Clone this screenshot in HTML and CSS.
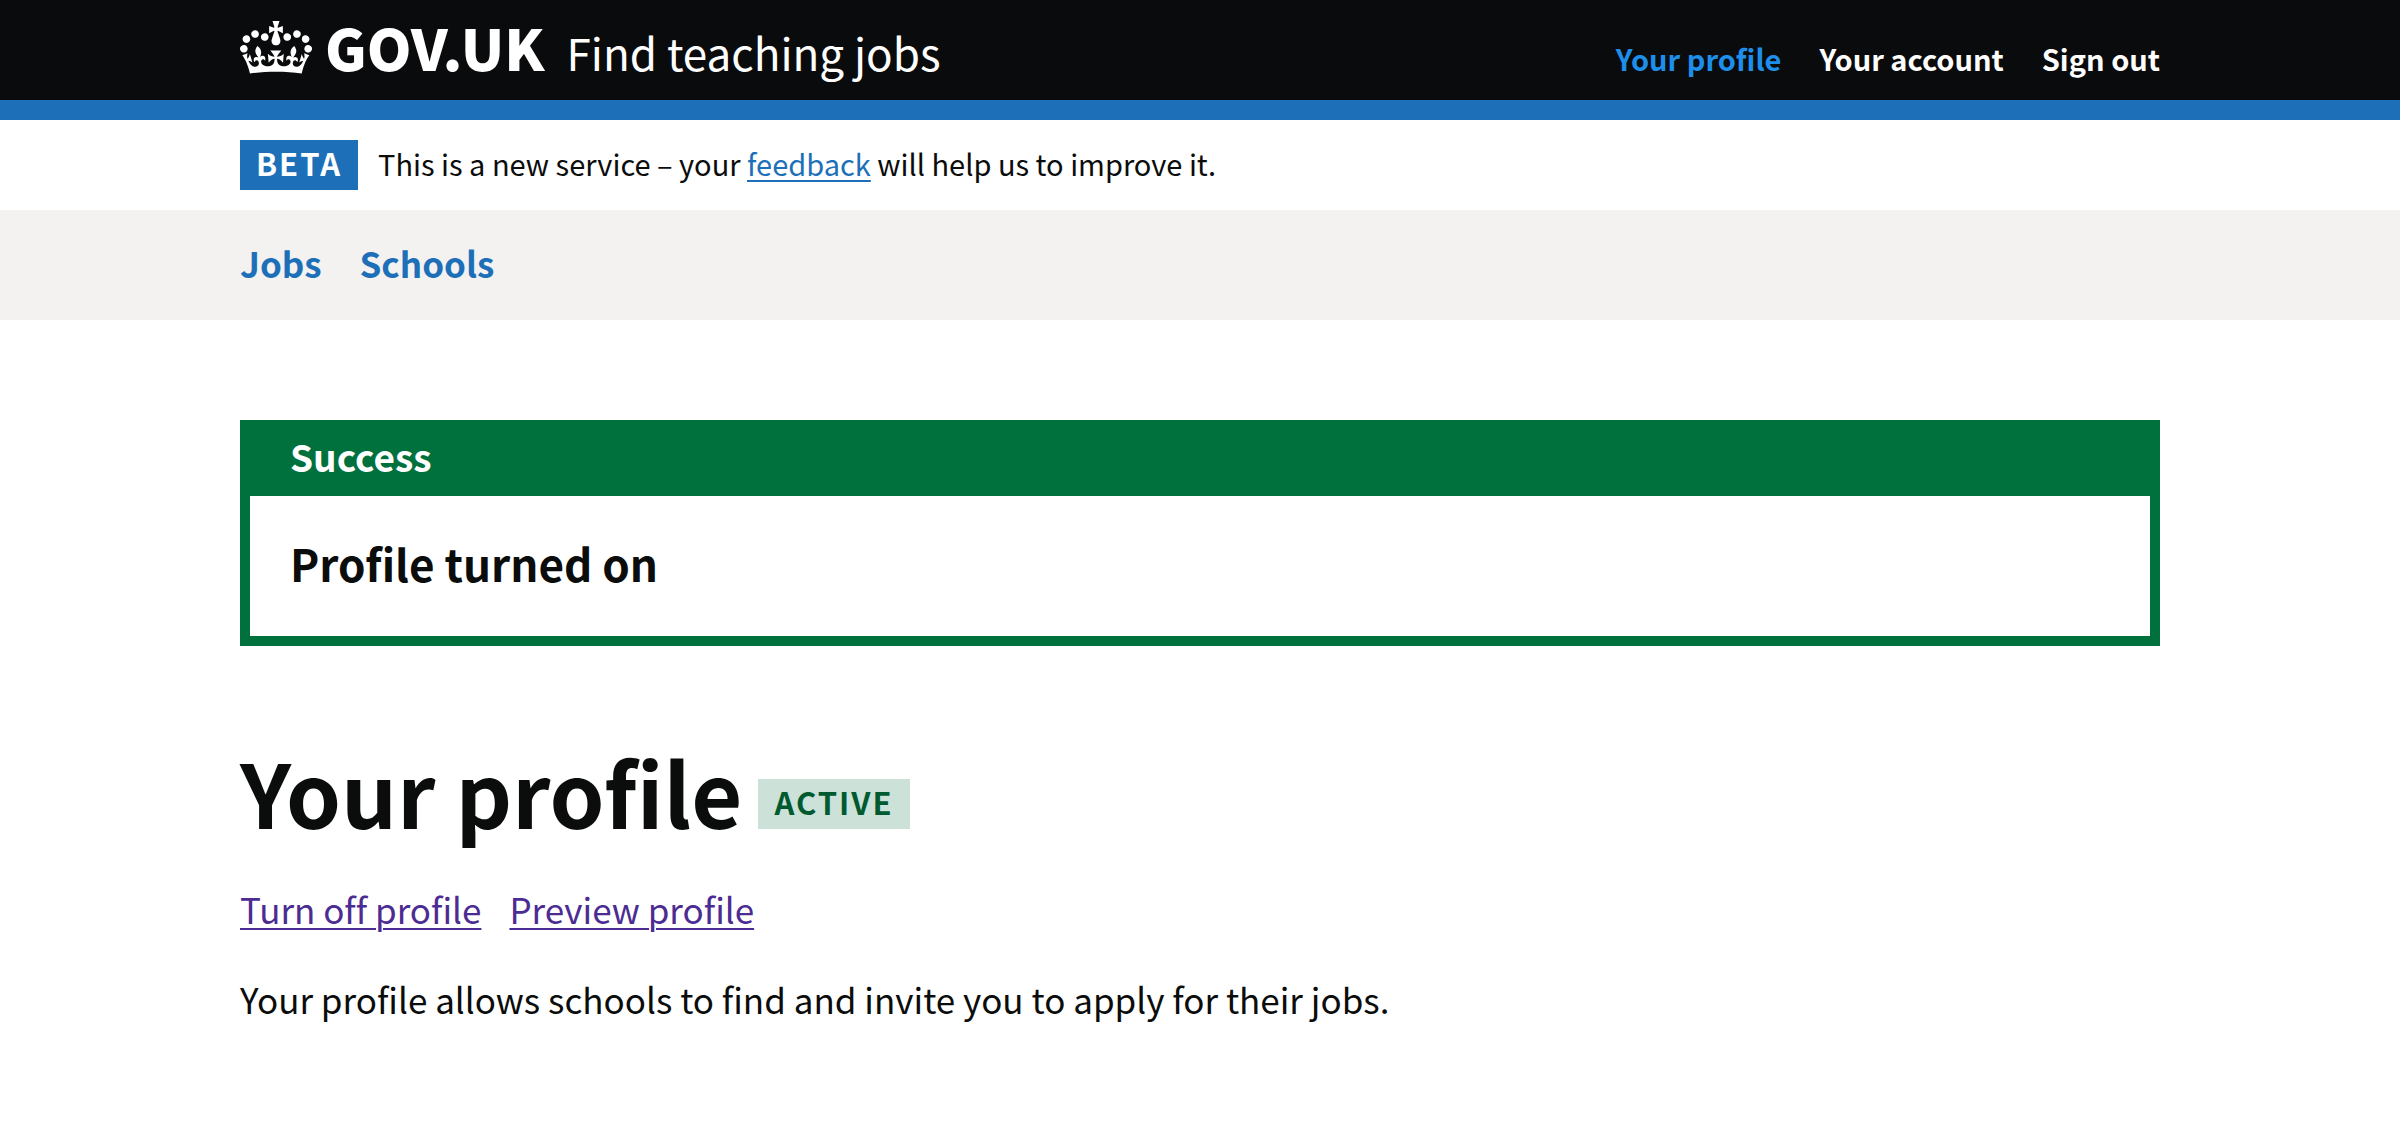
FILE: index.html
```html
<!DOCTYPE html>
<html lang="en">
<head>
<meta charset="utf-8">
<meta name="viewport" content="width=device-width, initial-scale=1">
<title>Your profile - Find teaching jobs - GOV.UK</title>
<link rel="stylesheet" href="styles.css">
</head>
<body>
<header class="header">
  <div class="container header-row">
    <div class="brand">
      <a class="logo" href="#">
        <svg class="crown" viewBox="0 0 132 97" aria-hidden="true" focusable="false"><path fill="currentColor" fill-rule="evenodd" d="M25 30.2c3.5 1.5 7.7-.2 9.1-3.7 1.5-3.6-.2-7.8-3.9-9.2-3.6-1.4-7.6.3-9.1 3.9-1.4 3.5.3 7.5 3.9 9zM9 39.5c3.6 1.5 7.8-.2 9.2-3.7 1.5-3.6-.2-7.8-3.9-9.1-3.6-1.5-7.6.2-9.1 3.8-1.4 3.5.3 7.5 3.8 9zM4.4 57.2c3.5 1.5 7.7-.2 9.1-3.8 1.5-3.6-.2-7.7-3.9-9.1-3.5-1.5-7.6.3-9.1 3.8-1.4 3.5.3 7.6 3.9 9.1zm38.3-21.4c3.5 1.5 7.7-.2 9.1-3.8 1.5-3.6-.2-7.7-3.9-9.1-3.6-1.5-7.6.3-9.1 3.8-1.3 3.6.4 7.7 3.9 9.1zm64.4-5.6c-3.6 1.5-7.8-.2-9.1-3.7-1.5-3.6.2-7.8 3.8-9.2 3.6-1.4 7.7.3 9.2 3.9 1.3 3.5-.4 7.5-3.9 9zm15.9 9.3c-3.6 1.5-7.7-.2-9.1-3.7-1.5-3.6.2-7.8 3.7-9.1 3.6-1.5 7.7.2 9.2 3.8 1.5 3.5-.3 7.5-3.8 9zm4.7 17.7c-3.6 1.5-7.8-.2-9.2-3.8-1.5-3.6.2-7.7 3.9-9.1 3.6-1.5 7.7.3 9.2 3.8 1.3 3.5-.4 7.6-3.9 9.1zM89.3 35.8c-3.6 1.5-7.8-.2-9.2-3.8-1.4-3.6.2-7.7 3.9-9.1 3.6-1.5 7.7.3 9.2 3.8 1.4 3.6-.3 7.7-3.9 9.1zM69.7 17.7l8.9 4.7V9.3l-8.9 2.8c-.2-.3-.5-.6-.9-.9L72.4 0H59.6l3.5 11.2c-.3.3-.6.5-.9.9l-8.8-2.8v13.1l8.8-4.7c.3.3.6.7.9.9l-5 15.4v.1c-.2.8-.4 1.6-.4 2.4 0 4.1 3.1 7.5 7 8.1h.2c.3 0 .7.1 1 .1.4 0 .7 0 1-.1h.2c4-.6 7.1-4.1 7.1-8.1 0-.8-.1-1.7-.4-2.4V34l-5.1-15.4c.4-.2.7-.6 1-.9zM66 92.8c16.9 0 32.8 1.1 47.1 3.2 4-16.9 8.9-26.7 14-33.5l-9.6-3.4c1 4.9 1.1 7.2 0 10.2-1.5-1.4-3-4.3-4.2-8.7L108.6 76c2.8-2 5-3.2 7.5-3.3-4.4 9.4-10 11.9-13.6 11.2-4.3-.8-6.3-4.6-5.6-7.9 1-4.7 5.7-5.9 8-.5 4.3-8.7-3-11.4-7.6-8.8 7.1-7.2 7.9-13.5 2.1-21.1-8 6.1-8.1 12.3-4.5 20.8-4.7-5.4-12.1-2.5-9.5 6.2 3.4-5.2 7.9-2 7.2 3.1-.6 4.3-6.4 7.8-13.5 7.2-10.3-.9-10.9-8-11.2-13.8 2.5-.5 7.1 1.8 11 7.3L80.2 60c-4.1 4.4-8 5.3-12.3 5.4 1.4-4.4 8-11.6 8-11.6H55.5s6.4 7.2 7.9 11.6c-4.2-.1-8-1-12.3-5.4l1.4 16.4c3.9-5.5 8.5-7.7 10.9-7.3-.3 5.8-.9 12.8-11.1 13.8-7.2.6-12.9-2.9-13.5-7.2-.7-5 3.8-8.3 7.1-3.1 2.7-8.7-4.6-11.6-9.4-6.2 3.7-8.5 3.6-14.7-4.6-20.8-5.8 7.6-5 13.9 2.2 21.1-4.7-2.6-11.9.1-7.7 8.8 2.3-5.5 7.1-4.2 8.1.5.7 3.3-1.3 7.1-5.7 7.9-3.5.7-9-1.8-13.5-11.2 2.5.1 4.7 1.3 7.5 3.3l-4.7-15.4c-1.2 4.4-2.7 7.2-4.3 8.7-1.1-3-.9-5.3 0-10.2l-9.5 3.4c5 6.9 9.9 16.7 14 33.5 14.8-2.1 30.8-3.2 47.7-3.2z"/></svg>
        <span class="logotype">GOV.UK</span>
      </a>
      <a class="service" href="#">Find teaching jobs</a>
    </div>
    <nav class="account-nav" aria-label="Account">
      <a class="account-link account-link-active" href="#" aria-current="page">Your profile</a>
      <a class="account-link" href="#">Your account</a>
      <a class="account-link" href="#">Sign out</a>
    </nav>
  </div>
</header>
<div class="phase container">
  <strong class="tag tag-beta">BETA</strong>
  <span class="phase-text">This is a new service – your <a class="link" href="#">feedback</a> will help us to improve it.</span>
</div>
<nav class="subnav" aria-label="Main">
  <div class="container subnav-row">
    <a class="subnav-link" href="#">Jobs</a>
    <a class="subnav-link" href="#">Schools</a>
  </div>
</nav>
<main class="main container">
  <section class="banner" role="alert" aria-labelledby="banner-title">
    <h2 class="banner-title" id="banner-title">Success</h2>
    <p class="banner-body">Profile turned on</p>
  </section>
  <div class="title-row">
    <h1 class="title">Your profile</h1>
    <strong class="tag tag-active">ACTIVE</strong>
  </div>
  <div class="actions">
    <a class="link link-visited" href="#">Turn off profile</a>
    <a class="link link-visited" href="#">Preview profile</a>
  </div>
  <p class="lead">Your profile allows schools to find and invite you to apply for their jobs.</p>
</main>
</body>
</html>
```
FILE: styles.css
```css
* { box-sizing: border-box; }

body {
  margin: 0;
  background: #fff;
  color: #0b0c0c;
  font-family: "Noto Sans CJK SC", "Noto Sans", sans-serif;
  font-size: 35px;
  line-height: 50px;
  font-variant-ligatures: none;
}

h1, h2, p { margin: 0; }

.container {
  width: calc(100% - 60px);
  max-width: 1920px;
  margin: 0 auto;
}

.header {
  background: #0a0b0c;
  border-bottom: 20px solid #1d70b8;
  color: #fff;
}

.header a { color: inherit; text-decoration: none; }

.header-row {
  display: flex;
  align-items: baseline;
  justify-content: space-between;
  padding: 16px 0 17px;
}

.brand { display: flex; align-items: baseline; gap: 22px; line-height: 60px; }

.logo { display: flex; align-items: baseline; gap: 13px; }

/* The crown's base hangs slightly below the text baseline */
.crown { align-self: flex-end; width: 72px; height: 53px; margin-bottom: 2px; }

.logotype { font-size: 57px; font-weight: 900; }

.service { font-size: 44px; }

.account-nav { display: flex; gap: 38px; font-size: 29px; font-weight: 700; }

.header .account-link-active { color: #1d8feb; }

.phase {
  display: flex;
  align-items: center;
  gap: 20px;
  padding: 20px 0;
  font-size: 29px;
}

.phase-text { padding-bottom: 4px; line-height: 46px; }

.tag {
  padding: 0 16px 4px;
  font-size: 31px;
  font-weight: 700;
  line-height: 46px;
  letter-spacing: 2px;
}

.tag-beta { background: #1d70b8; color: #fff; }

.tag-active { margin-bottom: 7px; background: #cce2d8; color: #005a30; }

.link {
  color: #1d70b8;
  text-decoration: underline;
  text-decoration-thickness: 2px;
  text-underline-offset: 4px;
}

.link-visited { color: #4c2c92; }

.subnav { background: #f3f2f1; padding: 28px 0 32px; }

.subnav-row { display: flex; gap: 38px; font-weight: 700; }

.subnav-link { color: #1d70b8; text-decoration: none; }

.main { padding: 100px 0; }

.banner { border: 10px solid #00703c; }

.banner-title {
  padding: 1px 40px 15px;
  background: #00703c;
  color: #fff;
  font-size: 37px;
}

.banner-body {
  padding: 37px 40px 43px;
  font-size: 44px;
  font-weight: 700;
  line-height: 60px;
}

.title-row {
  display: flex;
  align-items: flex-end;
  gap: 16px;
  margin-top: 100px;
}

.title { font-size: 88px; line-height: 90px; }

.actions { display: flex; gap: 28px; margin-top: 48px; }

.lead { margin-top: 40px; }
```
